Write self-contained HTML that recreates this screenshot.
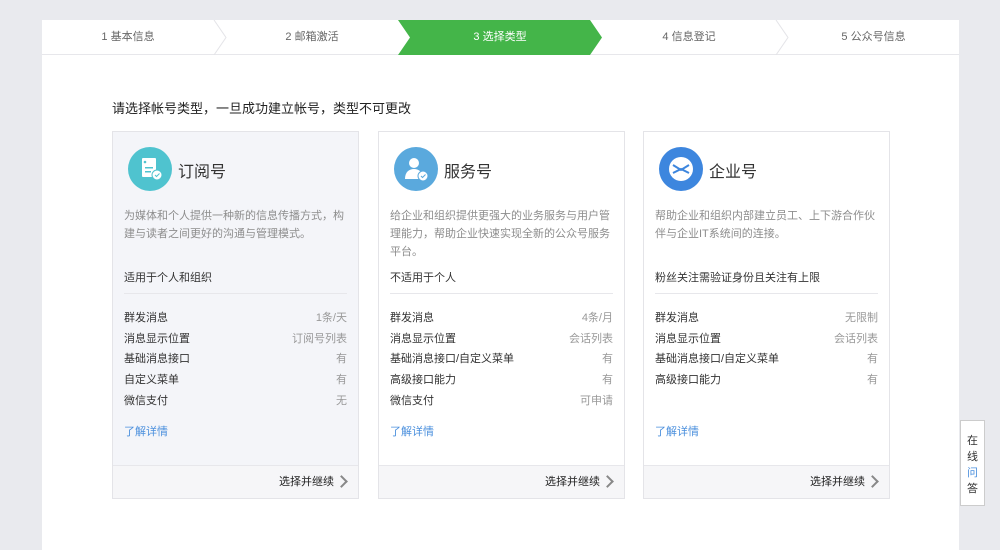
<!DOCTYPE html><html><head><meta charset="utf-8"><style>
*{margin:0;padding:0;box-sizing:border-box}
body{width:1000px;height:542px;background:#e9eaee;font-family:"Liberation Sans","Noto Sans CJK SC",sans-serif;position:relative;overflow:hidden;color:#333}
.panel{position:absolute;left:42px;top:20px;width:917px;height:530px;background:#fff}
.steps{position:absolute;left:0;top:0;width:917px;height:35px;border-bottom:1px solid #e7e7eb}
.st{position:absolute;top:0;height:35px;line-height:35px;font-size:11px;color:#666;text-align:center}
.title{position:absolute;left:70px;top:78px;font-size:13px;color:#222}
.card{position:absolute;top:111px;width:247px;height:368px;border:1px solid #e4e4e8;background:#fff}
.card.sel{background:#f4f5f9}
.ic{position:absolute;left:15px;top:15px;width:44px;height:44px;border-radius:50%}
.ct{position:absolute;left:65px;top:26px;font-size:16px;color:#333}
.desc{position:absolute;left:11px;top:75px;width:228px;font-size:11px;line-height:18px;color:#8d8d8d}
.for{position:absolute;left:11px;top:137px;font-size:11px;color:#333}
.hr{position:absolute;left:11px;right:11px;top:161px;border-top:1px solid #e7e7eb}
.rows{position:absolute;left:11px;right:11px;top:177px;font-size:11px}
.rows div{height:20.7px;line-height:18px;display:flex;justify-content:space-between}
.rows span:last-child{color:#999}
.link{position:absolute;left:11px;top:291px;font-size:11px;color:#4a8fdd}
.foot{position:absolute;left:0;right:0;bottom:0;height:33px;border-top:1px solid #e7e7eb;background:#f6f6f8;font-size:11px;text-align:right;padding-right:24px;line-height:32px;color:#222}
.foot:after{content:"";position:absolute;right:12px;top:11px;width:7px;height:7px;border-right:2px solid #888;border-top:2px solid #888;transform:rotate(45deg)}
.qa{position:absolute;left:960px;top:420px;width:25px;height:86px;background:#fff;border:1px solid #ccc;font-size:11px;text-align:center;line-height:16px;padding-top:12px}
</style></head><body>
<div class="panel">
<div class="steps">
<svg width="917" height="35" style="position:absolute;left:0;top:0">
<polygon points="356,0 548,0 560,17.5 548,35 356,35 368,17.5" fill="#44b549"/>
<polyline points="172,0 184,17.5 172,35" fill="none" stroke="#e4e4e8"/>
<polyline points="734,0 746,17.5 734,35" fill="none" stroke="#e4e4e8"/>
</svg>
<div class="st" style="left:0;width:172px">1 基本信息</div>
<div class="st" style="left:184px;width:172px">2 邮箱激活</div>
<div class="st" style="left:368px;width:180px;color:#fff">3 选择类型</div>
<div class="st" style="left:560px;width:174px">4 信息登记</div>
<div class="st" style="left:746px;width:171px">5 公众号信息</div>
</div>
<div class="title">请选择帐号类型，一旦成功建立帐号，类型不可更改</div>

<div class="card sel" style="left:70px">
<div class="ic" style="background:#4fc3cf"><svg width="44" height="44"><rect x="14" y="11" width="14" height="19" rx="1" fill="#fff"/><circle cx="17" cy="15" r="1.3" fill="#4fc3cf"/><rect x="17" y="20" width="8" height="1.5" fill="#4fc3cf"/><rect x="17" y="24" width="6" height="1.5" fill="#4fc3cf"/><circle cx="29" cy="28" r="5" fill="#fff" stroke="#4fc3cf"/><path d="M27 28l1.5 1.5 3-3" stroke="#4fc3cf" fill="none"/></svg></div>
<div class="ct">订阅号</div>
<div class="desc">为媒体和个人提供一种新的信息传播方式，构建与读者之间更好的沟通与管理模式。</div>
<div class="for">适用于个人和组织</div><div class="hr"></div>
<div class="rows"><div><span>群发消息</span><span>1条/天</span></div><div><span>消息显示位置</span><span>订阅号列表</span></div><div><span>基础消息接口</span><span>有</span></div><div><span>自定义菜单</span><span>有</span></div><div><span>微信支付</span><span>无</span></div></div>
<div class="link">了解详情</div><div class="foot">选择并继续</div></div>

<div class="card" style="left:336px">
<div class="ic" style="background:#5aa9dd"><svg width="44" height="44"><circle cx="20" cy="16" r="5" fill="#fff"/><path d="M11 32c0-7 4-10 9-10s9 3 9 10z" fill="#fff"/><circle cx="29" cy="29" r="5" fill="#fff" stroke="#5aa9dd"/><path d="M27 29l1.5 1.5 3-3" stroke="#5aa9dd" fill="none"/></svg></div>
<div class="ct">服务号</div>
<div class="desc">给企业和组织提供更强大的业务服务与用户管理能力，帮助企业快速实现全新的公众号服务平台。</div>
<div class="for">不适用于个人</div><div class="hr"></div>
<div class="rows"><div><span>群发消息</span><span>4条/月</span></div><div><span>消息显示位置</span><span>会话列表</span></div><div><span>基础消息接口/自定义菜单</span><span>有</span></div><div><span>高级接口能力</span><span>有</span></div><div><span>微信支付</span><span>可申请</span></div></div>
<div class="link">了解详情</div><div class="foot">选择并继续</div></div>

<div class="card" style="left:601px">
<div class="ic" style="background:#3d86de"><svg width="44" height="44"><circle cx="22" cy="22" r="12" fill="#fff"/><path d="M14 18l8 5 8-5M14 26l8-4 8 4" stroke="#3d86de" stroke-width="2" fill="none"/></svg></div>
<div class="ct">企业号</div>
<div class="desc">帮助企业和组织内部建立员工、上下游合作伙伴与企业IT系统间的连接。</div>
<div class="for">粉丝关注需验证身份且关注有上限</div><div class="hr"></div>
<div class="rows"><div><span>群发消息</span><span>无限制</span></div><div><span>消息显示位置</span><span>会话列表</span></div><div><span>基础消息接口/自定义菜单</span><span>有</span></div><div><span>高级接口能力</span><span>有</span></div></div>
<div class="link">了解详情</div><div class="foot">选择并继续</div></div>
</div>
<div class="qa">在<br>线<br><span style="color:#4a8fdd">问</span><br>答</div>
</body></html>
